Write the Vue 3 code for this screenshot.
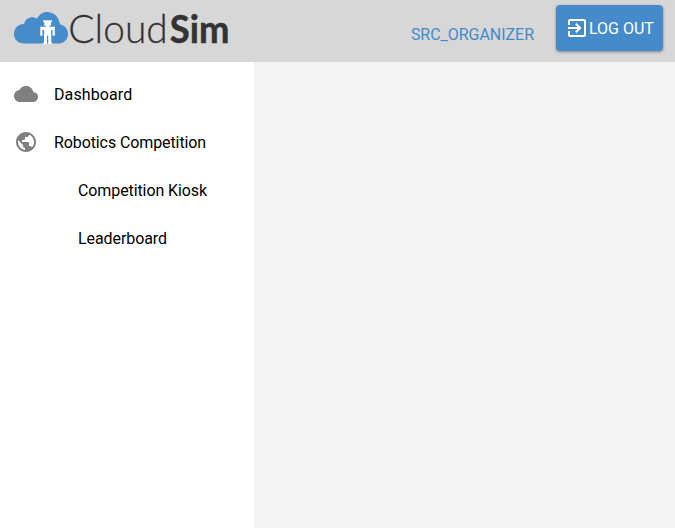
<script setup>
const items = [
  { label: 'Dashboard', icon: 'cloud', tracking: 0.1 },
  { label: 'Robotics Competition', icon: 'globe', tracking: -0.1 },
  { label: 'Competition Kiosk', nested: true, tracking: -0.1 },
  { label: 'Leaderboard', nested: true, tracking: -0.08 },
]
const icons = {
  cloud: 'M19.35 10.04C18.67 6.59 15.64 4 12 4 9.11 4 6.6 5.64 5.35 8.04 2.34 8.36 0 10.91 0 14c0 3.31 2.69 6 6 6h13c2.76 0 5-2.24 5-5 0-2.64-2.05-4.78-4.65-4.96z',
  globe: 'M12 2C6.48 2 2 6.48 2 12s4.48 10 10 10 10-4.48 10-10S17.52 2 12 2zm-1 17.93c-3.95-.49-7-3.85-7-7.93 0-.62.08-1.21.21-1.79L9 15v1c0 1.1.9 2 2 2v1.93zm6.9-2.54c-.26-.81-1-1.39-1.9-1.39h-1v-3c0-.55-.45-1-1-1H8v-2h2c.55 0 1-.45 1-1V7h2c1.1 0 2-.9 2-2v-.41c2.93 1.19 5 4.06 5 7.41 0 2.08-.8 3.97-2.1 5.39z',
}
</script>

<template>
  <div class="app">
    <header class="toolbar">
      <svg class="logo" viewBox="0 0 240 52" role="img" aria-label="CloudSim">
        <path class="cloud" d="M24 43.5C18 43.5 14 39.5 14 34C14 28.2 18.3 24 24 24C25.5 19.5 28.3 17.3 32 17.3C34 17.3 35.6 17.8 37 18.8C39.2 14.5 42.7 12 47 12C54 12 59.3 17.3 60 24.5C64.5 25 68 29 68 33.8C68 39.3 64 43.5 59 43.5Z" />
        <path class="robot" d="M43.3 20.2H51.9V22.2H51V25.7H49.2V26.7H54.8V35.7H52.6V30H51.2V34.5H51.3V42.4H52V44H48.2V35.5H47V44H43.2V42.4H44V34.5H44.2V30H42.4V35.7H40.3V26.7H46V25.7H44.3V22.2H43.3Z" />
        <text class="word light" x="68.3" y="42.6" textLength="99.4" lengthAdjust="spacingAndGlyphs">Cloud</text>
        <text class="word bold" x="169.8" y="42.6" textLength="59.6" lengthAdjust="spacingAndGlyphs">Sim</text>
      </svg>
      <span class="user">SRC_ORGANIZER</span>
      <button class="logout">
        <svg viewBox="0 0 24 24"><path d="M10.09 15.59L11.5 17l5-5-5-5-1.41 1.41L12.67 11H3v2h9.67l-2.58 2.59zM19 3H5c-1.11 0-2 .9-2 2v4h2V5h14v14H5v-4H3v4c0 1.1.89 2 2 2h14c1.1 0 2-.9 2-2V5c0-1.1-.9-2-2-2z" /></svg>
        <span>LOG OUT</span>
      </button>
    </header>
    <div class="body">
      <nav class="sidebar">
        <a v-for="item in items" :key="item.label" class="item" :class="{ nested: item.nested }">
          <svg v-if="item.icon" viewBox="0 0 24 24"><path :d="icons[item.icon]" /></svg>
          <span :style="{ letterSpacing: item.tracking + 'px' }">{{ item.label }}</span>
        </a>
      </nav>
      <main class="content"></main>
    </div>
  </div>
</template>

<style>
body { margin: 0; }
</style>

<style scoped>
.app {
  display: flex;
  flex-direction: column;
  height: 100vh;
  font: 16px/24px Roboto, sans-serif;
  color: #000;
}
.toolbar {
  display: flex;
  align-items: flex-start;
  box-sizing: border-box;
  height: 62px;
  padding-right: 12px;
  background: #d7d7d7;
}
.logo { width: 240px; height: 52px; }
.cloud { fill: #468bca; }
.robot { fill: #fff; }
.word { font-family: Lato, sans-serif; font-size: 39px; fill: #333; }
.light { font-weight: 300; stroke: #333; stroke-width: .3; }
.bold { font-weight: 700; stroke: #333; stroke-width: .5; }
.user {
  margin: 23px 22px 0 auto;
  color: #428bca;
  letter-spacing: -.03px;
}
.logout {
  display: flex;
  align-items: center;
  box-sizing: border-box;
  width: 107px;
  height: 46px;
  margin-top: 5px;
  padding: 0 0 0 9px;
  border: 0;
  border-radius: 4px;
  background: #458bca;
  box-shadow: 0 1px 3px rgba(0, 0, 0, .4);
  color: #fff;
  font: inherit;
  white-space: nowrap;
}
.logout svg { width: 24px; height: 24px; fill: currentColor; }
.logout span { padding-top: 2px; }
.body { display: flex; flex: 1; }
.sidebar {
  box-sizing: border-box;
  width: 254px;
  padding-top: 8px;
  background: #fff;
}
.item {
  display: flex;
  align-items: center;
  gap: 16px;
  height: 48px;
  padding-left: 14px;
}
.nested { padding-left: 78px; }
.item svg { width: 24px; height: 24px; fill: #808080; }
.item span { padding-top: 2px; }
.content { flex: 1; background: #f3f3f3; }
</style>
